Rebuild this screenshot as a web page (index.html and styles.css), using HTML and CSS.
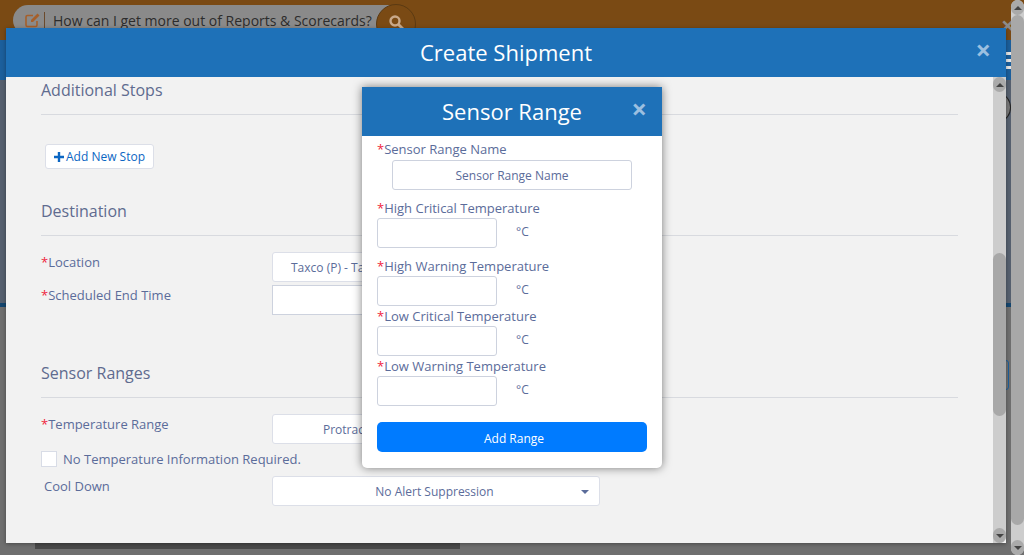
FILE: index.html
```html
<!DOCTYPE html>
<html lang="en">
<head>
  <meta charset="UTF-8">
  <title>Create Shipment</title>
  <link rel="stylesheet" href="styles.css">
</head>
<body>
  <!-- dimmed page behind the modals -->
  <div class="page">
    <div class="topbar">
      <div class="search">
        <svg class="search-edit" viewBox="0 0 16 16" width="16" height="16">
          <path d="M12 9v4a1.5 1.5 0 0 1-1.5 1.5h-8A1.5 1.5 0 0 1 1 13V5a1.5 1.5 0 0 1 1.5-1.5H8" fill="none" stroke="#a65f2a" stroke-width="1.6"/>
          <path d="M6 8l6.5-6.5 2 2L8 10H6z" fill="#a65f2a"/>
        </svg>
        <span class="search-sep"></span>
        <span class="search-text">How can I get more out of Reports &amp; Scorecards?</span>
      </div>
      <div class="search-btn">
        <svg viewBox="0 0 16 16" width="16" height="16">
          <circle cx="7" cy="7" r="4.5" fill="none" stroke="#c9a98a" stroke-width="2.4"/>
          <path d="M10.5 10.5L15 15" stroke="#c9a98a" stroke-width="2.8"/>
        </svg>
      </div>
    </div>
    <div class="navbar"></div>
    <div class="page-body"></div>
    <div class="page-line"></div>
    <div class="page-low"><div class="page-band"></div></div>
  </div>

  <span class="page-close">&times;</span>
  <div class="page-burger"><span></span><span></span><span></span></div>
  <div class="page-circle"></div>
  <div class="page-box"></div>

  <div class="page-scroll">
    <div class="scroll-btn"><span class="arrow-up"></span></div>
    <div class="page-track"><div class="page-thumb"></div></div>
    <div class="scroll-btn"><span class="arrow-down"></span></div>
  </div>

  <!-- Create Shipment -->
  <div class="modal">
    <div class="modal-head">
      <h1>Create Shipment</h1>
      <span class="close">&times;</span>
    </div>
    <div class="modal-main">
      <div class="modal-body">
        <h2 class="first">Additional Stops</h2>
        <button class="add-stop" type="button">
          <svg viewBox="0 0 10 10" width="10" height="10"><path d="M5 0v10M0 5h10" stroke="#0b66c3" stroke-width="2.4"/></svg>
          Add New Stop
        </button>

        <h2 class="dest">Destination</h2>
        <div class="row">
          <label><i>*</i>Location</label>
          <div class="select select-left">Taxco (P) - Taxco</div>
        </div>
        <div class="row row-time">
          <label><i>*</i>Scheduled End Time</label>
          <div class="text-input"></div>
        </div>

        <h2 class="sensors">Sensor Ranges</h2>
        <div class="row">
          <label><i>*</i>Temperature Range</label>
          <div class="select select-protrac">Protrac</div>
        </div>
        <div class="check-row">
          <span class="checkbox"></span>
          <span>No Temperature Information Required.</span>
        </div>
        <div class="row row-cool">
          <label class="plain">Cool Down</label>
          <div class="select">No Alert Suppression<span class="caret"></span></div>
        </div>
      </div>
      <div class="inner-scroll">
        <div class="scroll-btn"><span class="arrow-up"></span></div>
        <div class="inner-track"><div class="inner-thumb"></div></div>
        <div class="scroll-btn"><span class="arrow-down"></span></div>
      </div>
    </div>
  </div>

  <!-- Sensor Range -->
  <div class="popup">
    <div class="popup-head">
      <h3>Sensor Range</h3>
      <span class="close">&times;</span>
    </div>
    <div class="popup-body">
      <label class="field-label"><i>*</i>Sensor Range Name</label>
      <input class="name-input" type="text" placeholder="Sensor Range Name">

      <label class="field-label wide"><i>*</i>High Critical Temperature</label>
      <div class="temp-row"><input type="text"><span>°C</span></div>

      <label class="field-label wide"><i>*</i>High Warning Temperature</label>
      <div class="temp-row"><input type="text"><span>°C</span></div>

      <label class="field-label tight"><i>*</i>Low Critical Temperature</label>
      <div class="temp-row"><input type="text"><span>°C</span></div>

      <label class="field-label tight"><i>*</i>Low Warning Temperature</label>
      <div class="temp-row"><input type="text"><span>°C</span></div>

      <button class="add-range" type="button">Add Range</button>
    </div>
  </div>
</body>
</html>
```

FILE: styles.css
```css
* { box-sizing: border-box; }
html, body { margin: 0; height: 100%; overflow: hidden; }
body { font-family: "Open Sans", sans-serif; font-size: 13px; color: #5b6c9a; background: #6f6f6f; }

i { font-style: normal; color: #f0243c; }

/* page behind */
.page { height: 555px; display: flex; flex-direction: column; }
.topbar { height: 40px; flex: none; background: #7a4a14; display: flex; padding: 5px 0 0 13px; }
.search { width: 377px; height: 30px; background: #8a8a8a; border-radius: 16px 0 0 16px; display: flex; align-items: center; padding: 0 0 0 12px; color: #2c2c2c; font-size: 14px; }
.search-sep { width: 1px; height: 16px; background: #6b4a2c; margin: 0 8px 0 3px; }
.search-btn { width: 40px; height: 40px; margin: -1px 0 0 -14px; border-radius: 50%; background: #7a4a14; border: 1px solid #5b3a12; display: flex; justify-content: center; padding-top: 9px; }
.navbar { height: 40px; flex: none; background: #1c5f9c; }
.page-body { height: 223px; flex: none; background: #56606f; }
.page-line { height: 4px; flex: none; background: #14466f; }
.page-low { flex: 1; background: #6f6f6f; padding: 236px 0 0 35px; }
.page-band { width: 425px; height: 6px; background: #4a4a4a; }

.page-close { position: absolute; left: 1001px; top: 13px; font-size: 24px; line-height: 1; font-weight: 700; color: #8c8c8c; }
.page-burger { position: absolute; left: 1006px; top: 52px; width: 5px; display: flex; flex-direction: column; gap: 4px; }
.page-burger span { height: 3px; background: #e6e6e6; }
.page-circle { position: absolute; left: 990px; top: 94px; width: 21px; height: 27px; border: 1px solid #222; border-radius: 50%; background: #777; }
.page-box { position: absolute; left: 1000px; top: 360px; width: 9px; height: 30px; border: 1px solid #1c5f9c; border-radius: 3px; }

.page-scroll { position: absolute; top: 0; right: 0; width: 13px; height: 555px; background: #cdcdcd; display: flex; flex-direction: column; border-radius: 7px; }
.page-track { flex: 1; }
.page-thumb { height: 510px; background: #a8a8a8; border-radius: 7px; }

.scroll-btn { height: 15px; flex: none; background: #aaa; border-radius: 7px; display: flex; align-items: center; justify-content: center; }
.arrow-up { border: 4px solid transparent; border-top: 0; border-bottom: 4px solid #444; }
.arrow-down { border: 4px solid transparent; border-bottom: 0; border-top: 4px solid #444; }

/* create shipment modal */
.modal { position: absolute; left: 6px; top: 28px; width: 1000px; height: 515px; background: #f2f2f2; display: flex; flex-direction: column; box-shadow: 0 1px 4px rgba(0, 0, 0, 0.35); }
.modal-head { height: 49px; flex: none; background: #1e71b8; color: #fff; display: flex; align-items: center; justify-content: center; padding-bottom: 2px; position: relative; }
.modal-head h1 { margin: 0; font-size: 22px; font-weight: 400; }
.close { position: absolute; font-size: 27px; line-height: 1; color: #9bbfe0; font-weight: 700; }
.modal-head .close { right: 15px; top: 8px; }

.modal-main { flex: 1; display: flex; min-height: 0; }
.modal-body { flex: 1; padding: 0 35px; overflow: hidden; }
.inner-scroll { width: 13px; flex: none; background: #cdcdcd; display: flex; flex-direction: column; border-radius: 0 0 6px 0; }
.inner-track { flex: 1; padding-top: 161px; }
.inner-thumb { height: 163px; background: #a8a8a8; border-radius: 7px; }

h2 { margin: 0; font-size: 16px; font-weight: 400; color: #5f6b8f; height: 36px; line-height: 22px; border-bottom: 1px solid #d8dadf; width: 917px; }
h2.first { margin-top: 2px; }
h2.dest { margin-top: 31px; }
h2.sensors { margin-top: 47px; }

.add-stop { display: flex; align-items: center; gap: 2px; margin: 29px 0 0 4px; width: 109px; height: 25px; padding: 0 0 0 8px; background: #fff; border: 1px solid #dcdfe8; border-radius: 3px; color: #0b66c3; font: 12px "Open Sans", sans-serif; }

.row { display: flex; margin-top: 16px; }
.row label { width: 231px; flex: none; padding-top: 1px; }
.row-time { margin-top: 3px; }
.row-cool { margin-top: 9px; }
.row label.plain { padding-left: 3px; }

.select { width: 328px; height: 30px; background: #fff; border: 1px solid #dcdfe8; border-radius: 3px; font-size: 12px; display: flex; align-items: center; justify-content: center; position: relative; padding-right: 3px; }
.select-left { justify-content: flex-start; padding-left: 18px; }
.select-protrac { justify-content: flex-start; padding-left: 50px; }
.caret { position: absolute; right: 10px; top: 13px; border: 4px solid transparent; border-bottom: 0; border-top: 4px solid #5b6c9a; }
.text-input { width: 328px; height: 30px; background: #fff; border: 1px solid #cdd2de; }

.check-row { display: flex; align-items: center; gap: 6px; margin-top: 7px; height: 16px; }
.checkbox { width: 16px; height: 16px; background: #fff; border: 1px solid #d8dce6; }

/* sensor range popup */
.popup { position: absolute; left: 362px; top: 87px; width: 300px; height: 381px; background: #fff; border-radius: 0 0 5px 5px; box-shadow: 0 0 10px rgba(0, 0, 0, 0.5); }
.popup-head { height: 49px; background: #1e71b8; color: #fff; display: flex; align-items: center; justify-content: center; padding-bottom: 2px; position: relative; }
.popup-head h3 { margin: 0; font-size: 22px; font-weight: 400; }
.popup-head .close { right: 15px; top: 8px; }
.popup-body { padding: 4px 15px 0; display: flex; flex-direction: column; }
.field-label { display: block; line-height: 18px; height: 19px; }
.field-label.wide { margin-top: 9px; }
.field-label.tight { margin-top: 1px; }
input { font: 12px "Open Sans", sans-serif; background: #fff; border: 1px solid #cdd2de; border-radius: 3px; outline: none; }
.name-input { width: 240px; height: 30px; margin: 1px 0 0 15px; text-align: center; }
.name-input::placeholder { color: #5b6c9a; opacity: 1; }
.temp-row { display: flex; align-items: center; gap: 19px; }
.temp-row input { width: 120px; height: 30px; }
.temp-row span { font-size: 12px; padding-bottom: 4px; }
.add-range { margin-top: 16px; width: 270px; height: 30px; padding: 2px 0 0 4px; background: #007bff; color: #fff; border: 0; border-radius: 5px; font: 12px "Open Sans", sans-serif; }
```
